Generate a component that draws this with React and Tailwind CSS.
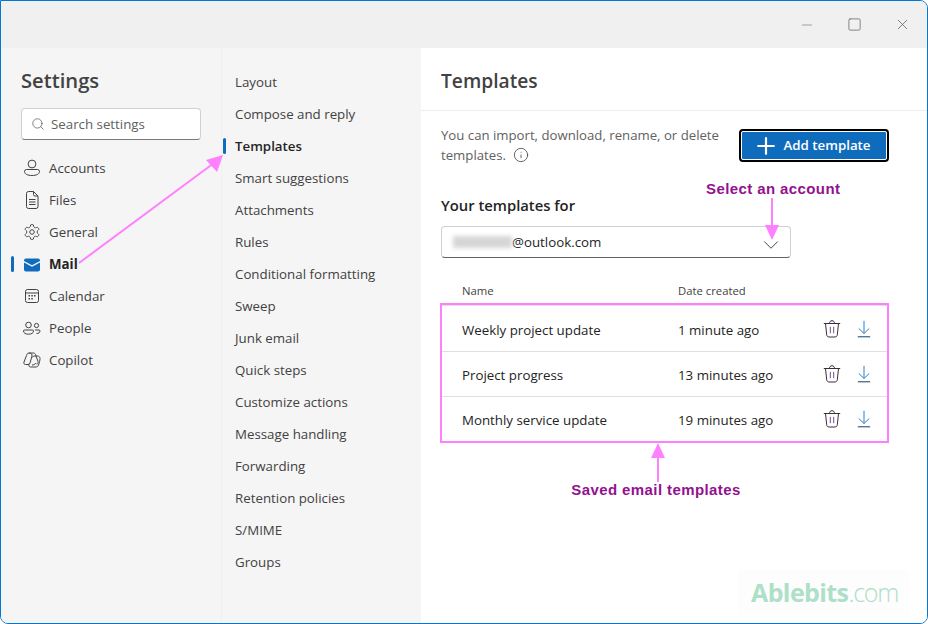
import { Search, Info, ChevronDown, Minus, Square, X } from 'lucide-react';

const font = "[font-family:'Open_Sans',sans-serif]";

function AccountIcon() {
  return (
    <svg width="18" height="18" viewBox="0 0 18 18" fill="none" stroke="#424242" strokeWidth="1">
      <circle cx="9" cy="5" r="3.9" />
      <path d="M3.5 10.5h11a2 2 0 0 1 2 2c0 2.6-3.2 4-7.5 4s-7.500-1.400-7.500-4a2 2 0 0 1 2-2z" />
    </svg>
  );
}

function FileIcon() {
  return (
    <svg width="18" height="18" viewBox="0 0 18 18" fill="none" stroke="#424242" strokeWidth="1">
      <path d="M3.500 2.500a2 2 0 0 1 2-2h5l4.500 4.500v10.500a2 2 0 0 1-2 2h-7.500a2 2 0 0 1-2-2z" />
      <path d="M10.500 .5v3a1.500 1.500 0 0 0 1.500 1.500h3M6 8.500h6.500M6 11h6.500M6 13.500h6.500" />
    </svg>
  );
}

function GearIcon() {
  return (
    <svg width="18" height="18" viewBox="0 0 24 24" fill="none" stroke="#424242" strokeWidth="1.300">
      <path d="M12.220 2h-.440a2 2 0 0 0-2 2v.180a2 2 0 0 1-1 1.730l-.430.250a2 2 0 0 1-2 0l-.150-.080a2 2 0 0 0-2.730.730l-.220.380a2 2 0 0 0 .730 2.730l.150.100a2 2 0 0 1 1 1.720v.510a2 2 0 0 1-1 1.740l-.150.090a2 2 0 0 0-.730 2.730l.220.380a2 2 0 0 0 2.730.730l.150-.080a2 2 0 0 1 2 0l.430.250a2 2 0 0 1 1 1.730V20a2 2 0 0 0 2 2h.440a2 2 0 0 0 2-2v-.180a2 2 0 0 1 1-1.730l.430-.250a2 2 0 0 1 2 0l.150.080a2 2 0 0 0 2.730-.730l.220-.390a2 2 0 0 0-.730-2.730l-.150-.080a2 2 0 0 1-1-1.740v-.500a2 2 0 0 1 1-1.740l.150-.090a2 2 0 0 0 .730-2.730l-.220-.380a2 2 0 0 0-2.730-.730l-.150.080a2 2 0 0 1-2 0l-.430-.250a2 2 0 0 1-1-1.730V4a2 2 0 0 0-2-2z" />
      <circle cx="12" cy="12" r="3" />
    </svg>
  );
}

function MailIcon() {
  return (
    <svg width="18" height="18" viewBox="0 0 18 18">
      <path d="M1 5.500a2 2 0 0 1 2-2h12a2 2 0 0 1 2 2v.500l-8 4.300-8-4.300z" fill="#0f6cbd" />
      <path d="M1 7.500l8 4.300 8-4.300v7a2 2 0 0 1-2 2h-12a2 2 0 0 1-2-2z" fill="#0f6cbd" />
    </svg>
  );
}

function CalendarIcon() {
  return (
    <svg width="18" height="18" viewBox="0 0 18 18" fill="none" stroke="#424242" strokeWidth="1">
      <rect x="2.500" y="2.500" width="13" height="13" rx="2" />
      <path d="M2.500 6h13" />
      <g fill="#424242" stroke="none">
        <rect x="5.500" y="8" width="1.500" height="1.500" />
        <rect x="8.300" y="8" width="1.500" height="1.500" />
        <rect x="11" y="8" width="1.500" height="1.500" />
        <rect x="5.500" y="11" width="1.500" height="1.500" />
        <rect x="8.300" y="11" width="1.500" height="1.500" />
      </g>
    </svg>
  );
}

function PeopleIcon() {
  return (
    <svg width="18" height="18" viewBox="0 0 18 18" fill="none" stroke="#424242" strokeWidth="1">
      <circle cx="5.500" cy="6" r="2.800" />
      <circle cx="13.500" cy="6.500" r="2.100" />
      <path d="M1.500 11h8a1 1 0 0 1 1 1c0 2-2 3.200-5 3.200s-5-1.200-5-3.200a1 1 0 0 1 1-1z" />
      <path d="M12 11h4a1 1 0 0 1 1 1c0 1.500-1.300 2.500-3.500 2.500" />
    </svg>
  );
}

function CopilotIcon() {
  return (
    <svg width="18" height="18" viewBox="0 0 18 18" fill="none" stroke="#424242" strokeWidth="1">
      <path d="M6 2h4.500c1 0 1.600.600 2 1.500l2.500 7c.400 1.300 0 2.500-1.500 2.500" />
      <path d="M6 2C4.500 2 4 3 3.500 4.500L1 11c-.500 1.500.200 2.500 1.500 2.500H5c1 0 1.600-.600 2-1.500l2-7C9.500 3.500 8 2 6 2z" />
      <path d="M12 5h2.500C16 5 17 6 17 7.500s-.500 4-1.500 6.500c-.500 1.300-1.300 2-2.500 2H7.500C6 16 5.500 14.500 6 13" />
      <path d="M9 6.500c.800-1 2-1.500 3-1.500M9 14c1.500 0 3-.500 4-2" />
    </svg>
  );
}

function TrashIcon() {
  return (
    <svg width="18" height="18" viewBox="0 0 18 18" fill="none" strokeWidth="1">
      <path d="M.8 3.500h16.400" stroke="#333" />
      <path d="M6.500 3.500c0-1.800 1-2.800 2.500-2.800s2.500 1 2.500 2.800" stroke="#333" />
      <path d="M2.500 3.500l1.200 11.300c.100 1.300 1 2.200 2.300 2.200h6c1.300 0 2.200-.900 2.300-2.200l1.200-11.300" stroke="#333" />
      <path d="M7.300 6.800v6.400" stroke="#7a4a8a" />
      <path d="M10.700 6.800v6.400" stroke="#7a4a8a" />
    </svg>
  );
}

function DownloadIcon() {
  return (
    <svg width="14" height="18" viewBox="0 0 14 18" fill="none" strokeWidth="1">
      <path d="M7 .8v12.500M1.800 8.500L7 13.500l5.200-5" stroke="#2f7fc8" />
      <path d="M.8 16.800h12.400" stroke="#1c3f66" />
    </svg>
  );
}

function PlusIcon() {
  return (
    <svg width="18" height="18" viewBox="0 0 18 18" fill="none" stroke="#ffffff" strokeWidth="2.200" strokeLinecap="round">
      <path d="M9 1.200v15.600M1.200 9h15.600" />
    </svg>
  );
}

const accountsNav = [
  { label: 'Accounts', icon: <AccountIcon /> },
  { label: 'Files', icon: <FileIcon /> },
  { label: 'General', icon: <GearIcon /> },
  { label: 'Mail', icon: <MailIcon />, active: true },
  { label: 'Calendar', icon: <CalendarIcon /> },
  { label: 'People', icon: <PeopleIcon /> },
  { label: 'Copilot', icon: <CopilotIcon /> },
];

const mailNav = [
  'Layout',
  'Compose and reply',
  'Templates',
  'Smart suggestions',
  'Attachments',
  'Rules',
  'Conditional formatting',
  'Sweep',
  'Junk email',
  'Quick steps',
  'Customize actions',
  'Message handling',
  'Forwarding',
  'Retention policies',
  'S/MIME',
  'Groups',
];

const templates = [
  { name: 'Weekly project update', date: '1 minute ago' },
  { name: 'Project progress', date: '13 minutes ago' },
  { name: 'Monthly service update', date: '19 minutes ago' },
];

export default function App() {
  return (
    <div className={`${font} relative w-[928px] h-[624px] flex flex-col overflow-hidden bg-white border border-[#0078d4] rounded-tr-[8px] rounded-b-[8px] text-[13.3px] text-[#424242]`}>
      {/* title bar */}
      <div className="h-[47px] shrink-0 bg-[#f0f0f0] flex items-center justify-end gap-[32px] pr-[16px]">
        <Minus size={16} strokeWidth={1.6} color="#a0a0a0" />
        <Square size={15} strokeWidth={1.3} color="#6e6e6e" />
        <X size={17} strokeWidth={1.1} color="#5e5e5e" />
      </div>

      <div className="flex flex-1 min-h-0">
        {/* settings column */}
        <div className="w-[220px] shrink-0 bg-[#f5f5f5] pt-[16px]">
          <div className="pl-[20px] text-[20.2px] leading-[32px] font-semibold text-[#424242]">Settings</div>
          <div className="ml-[20px] mt-[12px] w-[180px] h-[32px] bg-white rounded-[4px] border border-[#d1d1d1] border-b-[#7a7a7a] flex items-center pl-[9px] gap-[6px]">
            <Search size={14} strokeWidth={1.3} color="#616161" />
            <span className="mt-[2px] text-[#616161]">Search settings</span>
          </div>
          <div className="mt-[12px] flex flex-col">
            {accountsNav.map((item) => (
              <div key={item.label} className="relative h-[32px] flex items-center pl-[22px] gap-[8px]">
                {item.active && <span className="absolute left-[10px] top-[8px] w-[3px] h-[16px] rounded-full bg-[#0f6cbd]" />}
                {item.icon}
                <span className={item.active ? 'mt-[2px] font-bold text-[#242424]' : 'mt-[2px]'}>{item.label}</span>
              </div>
            ))}
          </div>
        </div>

        {/* mail category column */}
        <div className="w-[200px] shrink-0 bg-[#f5f5f5] border-l border-[#f0f0f0] pt-[19px]">
          {mailNav.map((label) => {
            const active = label === 'Templates';
            return (
              <div key={label} className="relative h-[32px] flex items-center pl-[13px]">
                {active && <span className="absolute left-[1px] top-[7px] w-[3px] h-[16px] rounded-full bg-[#0f6cbd]" />}
                <span className={active ? 'font-semibold text-[#242424]' : ''}>{label}</span>
              </div>
            );
          })}
        </div>

        {/* templates pane */}
        <div className="flex-1 min-w-0 bg-white">
          <div className="h-[63px] border-b border-[#eeeeee] pl-[20px] pt-[17px] text-[19.2px] leading-[32px] font-semibold text-[#424242]">
            Templates
          </div>
          <div className="flex pl-[20px] pr-[38px] pt-[18px] justify-between">
            <div className="w-[290px] -mt-[4px] leading-[20px] text-[13.2px] text-[#616161]">
              You can import, download, rename, or delete
              <br />
              templates.
              <Info size={16} strokeWidth={1.2} color="#424242" className="inline-block ml-[7px] -mt-[2px]" />
            </div>
            <div className="w-[150px] h-[33px] rounded-[4px] border-2 border-black bg-[#0f6cbd] outline outline-1 -outline-offset-3 outline-white flex items-center justify-center gap-[8px] text-white font-semibold">
              <PlusIcon />
              <span>Add template</span>
            </div>
          </div>
          <div className="pl-[20px] mt-[28px] text-[14.8px] leading-[24px] font-semibold text-[#242424]">Your templates for</div>
          <div className="ml-[20px] mt-[9px] w-[350px] h-[32px] rounded-[4px] border border-[#d1d1d1] border-b-[#616161] flex items-center pl-[11px] pr-[6px]">
            <span className="w-[59px] h-[12px] bg-[#d6d6d6] blur-[2px]" />
            <span className="flex-1 mt-[2px] text-[#242424]">@outlook.com</span>
            <ChevronDown size={26} strokeWidth={0.9} color="#424242" className="mt-[5px]" />
          </div>

          <div className="mt-[25px] pl-[41px] flex h-[16px] items-center text-[11.3px] text-[#424242]">
            <span className="w-[216px]">Name</span>
            <span>Date created</span>
          </div>
          <div className="ml-[19px] mt-[4px] w-[449px] border-2 border-[#ff80ff]">
            <div className="h-[1px] bg-[#e0e0e0]" />
            {templates.map((t, i) => (
              <div key={t.name} className={`h-[45px] flex items-center pl-[20px] text-[#242424] ${i > 0 ? 'border-t border-[#e0e0e0]' : ''}`}>
                <span className="w-[216px] mt-[4px]">{t.name}</span>
                <span className="w-[145px] mt-[4px]">{t.date}</span>
                <span className="mr-[16px] flex"><TrashIcon /></span>
                <span className="flex"><DownloadIcon /></span>
              </div>
            ))}
          </div>
          <div className="mt-[39px] ml-[130px] w-[210px] text-center [font-family:'Liberation_Sans',sans-serif] font-bold text-[15px] tracking-[0.4px] leading-[16px] text-[#92118f]">
            Saved email templates
          </div>
        </div>
      </div>

      {/* annotations */}
      <div className="absolute left-[705px] top-[180px] [font-family:'Liberation_Sans',sans-serif] font-bold text-[15px] tracking-[0.4px] leading-[16px] text-[#92118f]">
        Select an account
      </div>
      <svg className="absolute left-[-1px] top-[-1px] pointer-events-none" width="928" height="624" fill="#ff80ff" stroke="none">
        <path d="M79 263L214 163" stroke="#ff80ff" strokeWidth="2" fill="none" />
        <path d="M223 155L206 160L217 172z" />
        <path d="M772 198V232" stroke="#ff80ff" strokeWidth="2" fill="none" />
        <path d="M772 240L765 225H779z" />
        <path d="M658 482V452" stroke="#ff80ff" strokeWidth="2" fill="none" />
        <path d="M658 443L651 458H665z" />
      </svg>

      {/* watermark */}
      <div className="absolute right-[18px] bottom-[8px] w-[171px] h-[45px] bg-[#fdfdfd] flex items-center pl-[13px] text-[25px] text-[#aedfc8] tracking-[-0.6px]">
        <span className="font-bold">Ablebits</span>
        <span className="font-light tracking-[-1.2px]">.com</span>
      </div>
    </div>
  );
}
